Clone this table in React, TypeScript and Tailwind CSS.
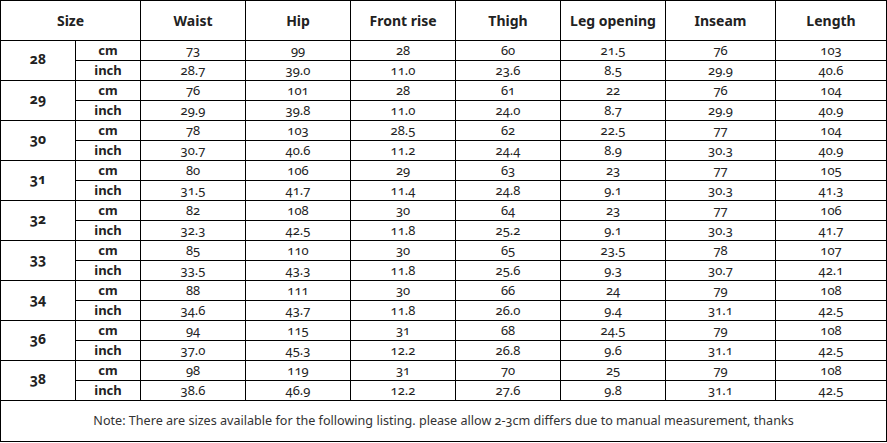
import { Fragment } from "react";

const headers = ["Waist", "Hip", "Front rise", "Thigh", "Leg opening", "Inseam", "Length"];

const sizes: { size: string; cm: string[]; inch: string[] }[] = [
  { size: "28", cm: ["73", "99", "28", "60", "21.5", "76", "103"], inch: ["28.7", "39.0", "11.0", "23.6", "8.5", "29.9", "40.6"] },
  { size: "29", cm: ["76", "101", "28", "61", "22", "76", "104"], inch: ["29.9", "39.8", "11.0", "24.0", "8.7", "29.9", "40.9"] },
  { size: "30", cm: ["78", "103", "28.5", "62", "22.5", "77", "104"], inch: ["30.7", "40.6", "11.2", "24.4", "8.9", "30.3", "40.9"] },
  { size: "31", cm: ["80", "106", "29", "63", "23", "77", "105"], inch: ["31.5", "41.7", "11.4", "24.8", "9.1", "30.3", "41.3"] },
  { size: "32", cm: ["82", "108", "30", "64", "23", "77", "106"], inch: ["32.3", "42.5", "11.8", "25.2", "9.1", "30.3", "41.7"] },
  { size: "33", cm: ["85", "110", "30", "65", "23.5", "78", "107"], inch: ["33.5", "43.3", "11.8", "25.6", "9.3", "30.7", "42.1"] },
  { size: "34", cm: ["88", "111", "30", "66", "24", "79", "108"], inch: ["34.6", "43.7", "11.8", "26.0", "9.4", "31.1", "42.5"] },
  { size: "36", cm: ["94", "115", "31", "68", "24.5", "79", "108"], inch: ["37.0", "45.3", "12.2", "26.8", "9.6", "31.1", "42.5"] },
  { size: "38", cm: ["98", "119", "31", "70", "25", "79", "108"], inch: ["38.6", "46.9", "12.2", "27.6", "9.8", "31.1", "42.5"] },
];

const cell = "border border-black text-center p-0 leading-none";

export default function App() {
  return (
    <div className="bg-white w-[887px] h-[443px] font-['Noto_Sans',sans-serif] text-[#222]">
      <table className="table-fixed border-collapse w-[886px]">
        <colgroup>
          <col className="w-[75px]" />
          <col className="w-[65px]" />
          <col className="w-[105px]" />
          <col className="w-[105px]" />
          <col className="w-[105px]" />
          <col className="w-[105px]" />
          <col className="w-[105px]" />
          <col className="w-[110px]" />
          <col className="w-[111px]" />
        </colgroup>
        <thead>
          <tr className="h-[40px]">
            <th colSpan={2} className={`${cell} text-[14px] font-bold`}>Size</th>
            {headers.map((h) => (
              <th key={h} className={`${cell} text-[14px] font-bold`}>{h}</th>
            ))}
          </tr>
        </thead>
        <tbody className="text-[13px] oldstyle-nums">
          {sizes.map((s) => (
            <Fragment key={s.size}>
              <tr className="h-[20px]">
                <td rowSpan={2} className={`${cell} text-[14px] font-bold pb-[3px]`}>{s.size}</td>
                <td className={`${cell} font-bold text-[13px]`}>cm</td>
                {s.cm.map((v, i) => (
                  <td key={i} className={cell}>{v}</td>
                ))}
              </tr>
              <tr className="h-[20px]">
                <td className={`${cell} font-bold text-[13px]`}>inch</td>
                {s.inch.map((v, i) => (
                  <td key={i} className={cell}>{v}</td>
                ))}
              </tr>
            </Fragment>
          ))}
          <tr className="h-[41px]">
            <td colSpan={9} className={`${cell} text-[12.6px] text-[#333]`}>
              Note: There are sizes available for the following listing. please allow 2-3cm differs due to manual measurement, thanks
            </td>
          </tr>
        </tbody>
      </table>
    </div>
  );
}
